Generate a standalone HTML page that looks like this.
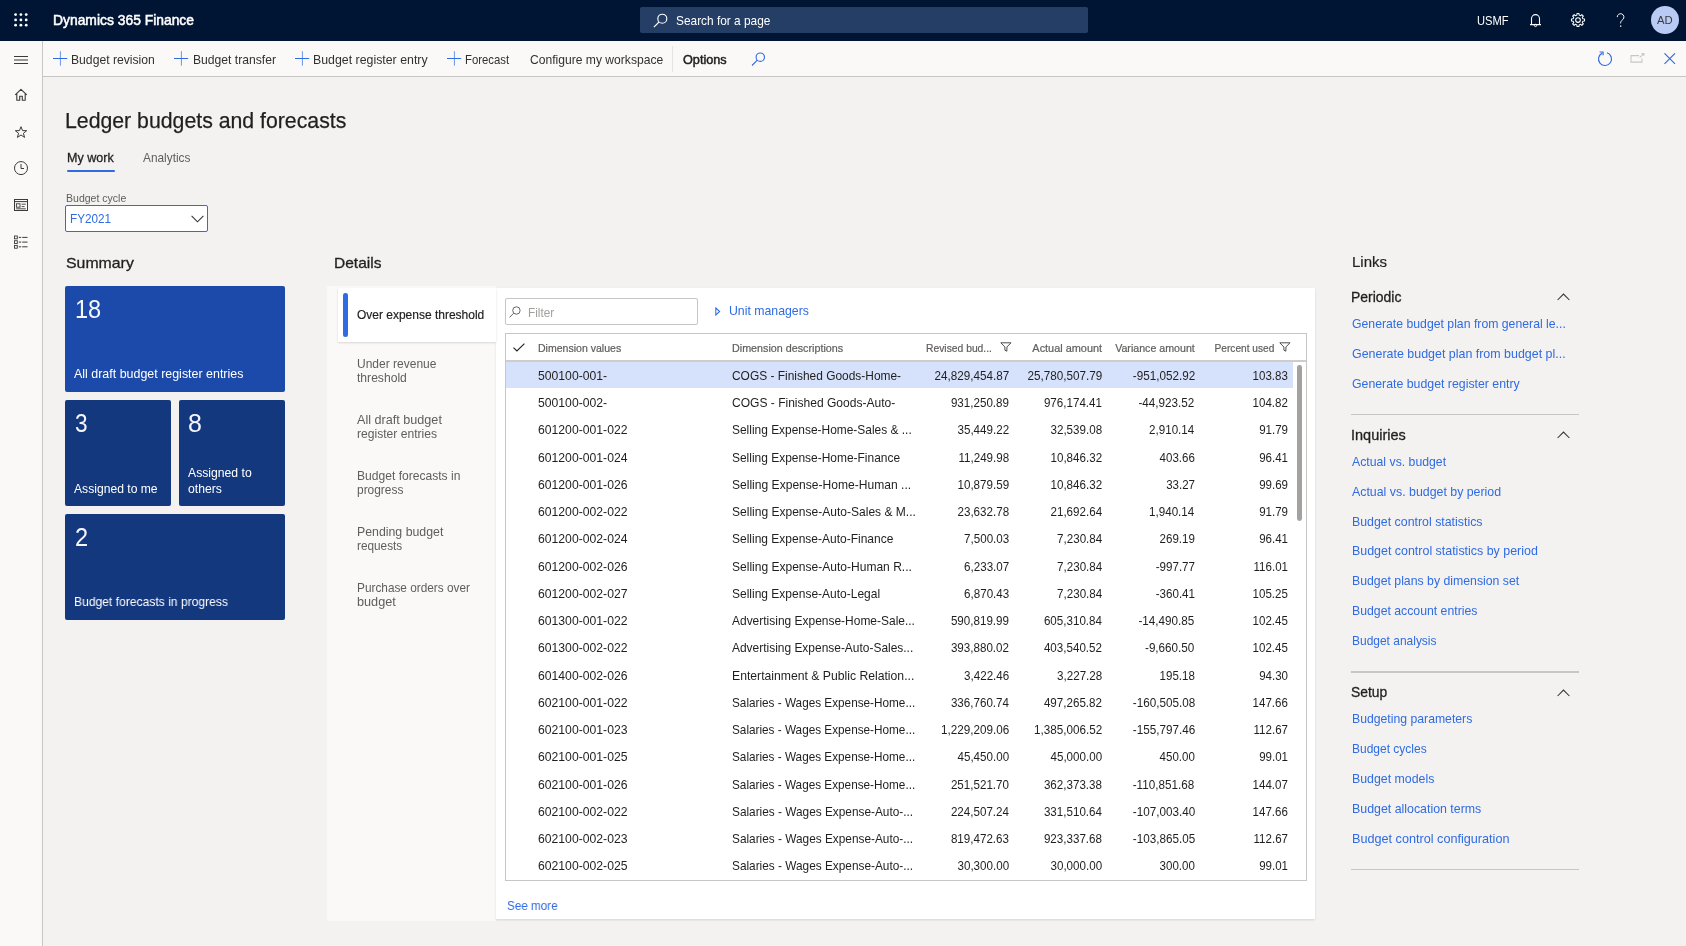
<!DOCTYPE html>
<html><head><meta charset="utf-8"><title>Ledger budgets and forecasts</title>
<style>
*{box-sizing:border-box;margin:0;padding:0}
html,body{width:1686px;height:946px;overflow:hidden}
body{font-family:"Liberation Sans",sans-serif;background:#f3f2f1;color:#201f1e;position:relative}
.abs{position:absolute}
.t{position:absolute;line-height:20px;white-space:nowrap;transform-origin:0 50%}
.t.r{transform-origin:100% 50%}
.hdr{position:absolute;left:0;top:0;width:1686px;height:41px;background:#001433}
.search{position:absolute;left:640px;top:7px;width:448px;height:26px;background:#253e66;border-radius:2px}
.avatar{position:absolute;left:1650.7px;top:5.8px;width:28.4px;height:28.4px;border-radius:50%;background:#b9cbf5}
.nav{position:absolute;left:0;top:41px;width:43px;height:905px;background:#faf9f8;border-right:1px solid #c8c6c4}
.abar{position:absolute;left:43px;top:41px;width:1643px;height:36px;background:#faf9f8;border-bottom:1px solid #c8c6c4}
.dd{position:absolute;left:65px;top:205px;width:143px;height:26.5px;border:1px solid #2f6be2;background:#fff;border-radius:2px}
.tile{position:absolute;height:105.7px;border-radius:2px}
.t1{background:#1b4aab}
.t2{background:#14387e}
.dpanel{position:absolute;left:327.3px;top:286.3px;width:169px;height:634.3px;background:#faf9f8}
.dmain{position:absolute;left:496px;top:288px;width:819px;height:630.6px;background:#fff;box-shadow:0 1px 2px rgba(0,0,0,.12)}
.dsel{position:absolute;left:338.3px;top:288px;width:158px;height:54.3px;background:#fff;box-shadow:0 1px 2px rgba(0,0,0,.14)}
.filter{position:absolute;left:505px;top:298px;width:193px;height:26.6px;border:1px solid #c8c6c4;border-radius:2px;background:#fff}
.grid{position:absolute;left:505px;top:333px;width:802px;height:547.5px;border:1px solid #c8c6c4;background:#fff}
.ghl{position:absolute;left:506px;top:360.2px;width:800px;height:1.8px;background:#cfcdcb}
.rsel{position:absolute;left:506px;top:362px;width:787px;height:25.6px;background:#d6e2fb}
.sbar{position:absolute;left:1297.2px;top:365.2px;width:4.8px;height:156px;background:#a3a2a0;border-radius:2.4px}
.layer{position:absolute;left:0;top:0;width:1686px;height:946px;will-change:transform}
</style></head>
<body>
<div class="layer">
<div class="hdr"></div>
<svg class="abs" style="left:14.4px;top:13.05px" width="14" height="14" viewBox="0 0 14 14" fill="#fff"><circle cx="1.60" cy="1.60" r="1.4"/><circle cx="1.60" cy="6.90" r="1.4"/><circle cx="1.60" cy="12.20" r="1.4"/><circle cx="6.90" cy="1.60" r="1.4"/><circle cx="6.90" cy="6.90" r="1.4"/><circle cx="6.90" cy="12.20" r="1.4"/><circle cx="12.20" cy="1.60" r="1.4"/><circle cx="12.20" cy="6.90" r="1.4"/><circle cx="12.20" cy="12.20" r="1.4"/></svg>
<div class="t" style="font-size:15px;color:#fff;top:9.50px;-webkit-text-stroke:0.55px #fff;left:53.00px;transform:scaleX(0.9242);">Dynamics 365 Finance</div>
<div class="search"></div>
<svg class="abs" style="left:653px;top:13px" width="15" height="15" viewBox="0 0 15 15"><circle cx="9.3" cy="5.7" r="4.5" fill="none" stroke="#fff" stroke-width="1.15"/><path d="M6 9 L0.9 14.1" stroke="#fff" stroke-width="1.15"/></svg>
<div class="t" style="font-size:13.2px;color:#fff;top:10.93px;left:675.50px;transform:scaleX(0.9005);">Search for a page</div>
<div class="t" style="font-size:12.6px;color:#fff;top:10.73px;left:1476.60px;transform:scaleX(0.8852);">USMF</div>
<svg class="abs" style="left:1529px;top:13px" width="13" height="15" viewBox="0 0 13 15"><path d="M1 11.6 H12 M2.5 11.6 V5.6 A4 4 0 0 1 10.5 5.6 V11.6" fill="none" stroke="#fff" stroke-width="1.1"/><circle cx="6.5" cy="12.45" r="1.15" fill="none" stroke="#fff" stroke-width="0.95"/></svg>
<svg class="abs" style="left:1570.3px;top:11.95px" width="16" height="16" viewBox="0 0 16 16"><path d="M14.52 6.97 L14.52 9.03 L12.86 9.17 L12.26 10.61 L13.34 11.88 L11.88 13.34 L10.61 12.26 L9.17 12.86 L9.03 14.52 L6.97 14.52 L6.83 12.86 L5.39 12.26 L4.12 13.34 L2.66 11.88 L3.74 10.61 L3.14 9.17 L1.48 9.03 L1.48 6.97 L3.14 6.83 L3.74 5.39 L2.66 4.12 L4.12 2.66 L5.39 3.74 L6.83 3.14 L6.97 1.48 L9.03 1.48 L9.17 3.14 L10.61 3.74 L11.88 2.66 L13.34 4.12 L12.26 5.39 L12.86 6.83 Z" fill="none" stroke="#fff" stroke-width="1.05" stroke-linejoin="round"/><circle cx="8" cy="8" r="2.35" fill="none" stroke="#fff" stroke-width="1.05"/></svg>
<svg class="abs" style="left:1616.4px;top:12.6px" width="9.9" height="14.4" viewBox="0 0 11 16"><path d="M1.4 4.6 A3.7 3.7 0 1 1 7.6 7.2 C5.8 8.8 5.1 9.6 5.1 11.6" fill="none" stroke="#fff" stroke-width="1.1"/><rect x="4.4" y="13.9" width="1.5" height="1.4" fill="#fff"/></svg>
<div class="avatar"></div>
<div class="t" style="font-size:11.2px;color:#3b3a39;top:9.82px;left:1656.90px;transform:scaleX(1.0091);">AD</div>
<div class="nav"></div>
<svg class="abs" style="left:14px;top:55px" width="14" height="10" viewBox="0 0 14 10"><path d="M0 1.5 H14 M0 5 H14 M0 8.5 H14" stroke="#3b3a39" stroke-width="1"/></svg>
<svg class="abs" style="left:14px;top:88px" width="14" height="13" viewBox="0 0 14 13"><path d="M1.2 6.8 L7 1.3 L12.8 6.8 M2.8 5.6 V12.2 H5.7 V8.2 H8.3 V12.2 H11.2 V5.6" fill="none" stroke="#3b3a39" stroke-width="1.1" stroke-linejoin="round"/></svg>
<svg class="abs" style="left:14px;top:125px" width="14" height="14" viewBox="0 0 14 14"><path d="M7 1.7 L8.5 5.6 L12.7 5.7 L9.4 8.3 L10.6 12.4 L7 10 L3.4 12.4 L4.6 8.3 L1.3 5.7 L5.5 5.6 Z" fill="none" stroke="#3b3a39" stroke-width="1"/></svg>
<svg class="abs" style="left:13px;top:160px" width="16" height="16" viewBox="0 0 16 16"><circle cx="8" cy="8.1" r="6.5" fill="none" stroke="#3b3a39" stroke-width="1"/><path d="M8 4 V8.5 H11" fill="none" stroke="#3b3a39" stroke-width="1"/></svg>
<svg class="abs" style="left:14px;top:198.5px" width="14" height="12" viewBox="0 0 14 12"><rect x="0.5" y="0.5" width="13" height="11" fill="none" stroke="#3b3a39" stroke-width="1"/><path d="M0.5 2.6 H13.5" stroke="#3b3a39" stroke-width="1"/><rect x="2.4" y="4.8" width="3.6" height="3.4" fill="none" stroke="#3b3a39" stroke-width="0.9"/><path d="M7.6 5.2 H11.8 M7.6 7.6 H10.6 M2.2 9.8 H11.8" stroke="#3b3a39" stroke-width="0.9"/></svg>
<svg class="abs" style="left:14px;top:235px" width="14" height="14" viewBox="0 0 14 14"><rect x="0.5" y="1" width="2.8" height="2.8" fill="none" stroke="#3b3a39" stroke-width="0.9"/><rect x="0.5" y="5.7" width="2.8" height="2.8" fill="none" stroke="#3b3a39" stroke-width="0.9"/><rect x="0.5" y="10.4" width="2.8" height="2.8" fill="none" stroke="#3b3a39" stroke-width="0.9"/><path d="M4.8 2.4 H13.5 M4.8 7.1 H13.5 M4.8 11.8 H13.5" stroke="#3b3a39" stroke-width="1" stroke-dasharray="2.4 1 9 0"/></svg>
<div class="abar"></div>
<svg class="abs" style="left:53px;top:51px" width="15" height="15" viewBox="0 0 15 15"><path d="M7.4 0.2 V14.7" stroke="#2f6be2" stroke-width="1" stroke-opacity="0.7"/><path d="M0 7.5 H14.2" stroke="#2f6be2" stroke-width="1"/></svg>
<div class="t" style="font-size:13px;color:#323130;top:49.60px;left:71.40px;transform:scaleX(0.9352);">Budget revision</div>
<svg class="abs" style="left:174px;top:51px" width="15" height="15" viewBox="0 0 15 15"><path d="M7.4 0.2 V14.7" stroke="#2f6be2" stroke-width="1" stroke-opacity="0.7"/><path d="M0 7.5 H14.2" stroke="#2f6be2" stroke-width="1"/></svg>
<div class="t" style="font-size:13px;color:#323130;top:49.60px;left:192.60px;transform:scaleX(0.9338);">Budget transfer</div>
<svg class="abs" style="left:295px;top:51px" width="15" height="15" viewBox="0 0 15 15"><path d="M7.4 0.2 V14.7" stroke="#2f6be2" stroke-width="1" stroke-opacity="0.7"/><path d="M0 7.5 H14.2" stroke="#2f6be2" stroke-width="1"/></svg>
<div class="t" style="font-size:13px;color:#323130;top:49.60px;left:313.00px;transform:scaleX(0.9497);">Budget register entry</div>
<svg class="abs" style="left:447px;top:51px" width="15" height="15" viewBox="0 0 15 15"><path d="M7.4 0.2 V14.7" stroke="#2f6be2" stroke-width="1" stroke-opacity="0.7"/><path d="M0 7.5 H14.2" stroke="#2f6be2" stroke-width="1"/></svg>
<div class="t" style="font-size:13px;color:#323130;top:49.60px;left:465.10px;transform:scaleX(0.8740);">Forecast</div>
<div class="t" style="font-size:13px;color:#323130;top:49.60px;left:529.70px;transform:scaleX(0.9311);">Configure my workspace</div>
<div class="abs" style="left:672px;top:46px;width:1px;height:26px;background:#e5e3e1"></div>
<div class="t" style="font-size:13px;color:#201f1e;top:49.60px;-webkit-text-stroke:0.5px #201f1e;left:682.70px;transform:scaleX(0.9732);">Options</div>
<svg class="abs" style="left:751px;top:52px" width="15" height="14" viewBox="0 0 15 14"><circle cx="9.3" cy="5.2" r="4.2" fill="none" stroke="#2f6be2" stroke-width="1.1"/><path d="M6.3 8.2 L1 13.5" stroke="#2f6be2" stroke-width="1.1"/></svg>
<svg class="abs" style="left:1596.8px;top:50.5px" width="16" height="16" viewBox="0 0 16 16"><path d="M9.90 1.78 A6.5 6.5 0 1 1 5.25 2.11" fill="none" stroke="#2f6be2" stroke-width="1.15"/><path d="M2.6 1 H6.1 V4.3" fill="none" stroke="#2f6be2" stroke-width="1.15"/></svg>
<svg class="abs" style="left:1629.5px;top:53px" width="15" height="10" viewBox="0 0 15 10"><path d="M9 2.6 H1 V9.1 H12 V5.4" fill="none" stroke="#c8c6c4" stroke-width="1.05"/><path d="M9.6 4.6 L13.7 0.8 M11.6 0.6 H13.9 V2.8" fill="none" stroke="#c8c6c4" stroke-width="1.05"/></svg>
<svg class="abs" style="left:1664px;top:53px" width="12" height="12" viewBox="0 0 12 12"><path d="M0.5 0.3 L11 10.8 M11 0.3 L0.5 10.8" stroke="#2f6be2" stroke-width="1.1"/></svg>
<div class="t" style="font-size:22px;color:#201f1e;top:110.68px;-webkit-text-stroke:0.25px #201f1e;left:64.90px;transform:scaleX(0.9664);">Ledger budgets and forecasts</div>
<div class="t" style="font-size:13px;color:#201f1e;top:148.20px;-webkit-text-stroke:0.3px #201f1e;left:67.30px;transform:scaleX(0.9651);">My work</div>
<div class="abs" style="left:67.2px;top:169.8px;width:47.9px;height:2.5px;background:#2f6be2;border-radius:1.3px"></div>
<div class="t" style="font-size:13px;color:#605e5c;top:148.20px;left:143.00px;transform:scaleX(0.9112);">Analytics</div>
<div class="t" style="font-size:11.5px;color:#605e5c;top:187.62px;left:65.70px;transform:scaleX(0.9158);">Budget cycle</div>
<div class="dd"></div>
<div class="t" style="font-size:13.2px;color:#2f6be2;top:209.13px;left:70.40px;transform:scaleX(0.8890);">FY2021</div>
<svg class="abs" style="left:190.5px;top:214.5px" width="13" height="8" viewBox="0 0 13 8"><path d="M0.6 0.9 L6.5 6.8 L12.4 0.9" fill="none" stroke="#323130" stroke-width="1.05"/></svg>
<div class="t" style="font-size:15px;color:#201f1e;top:252.60px;-webkit-text-stroke:0.3px #201f1e;left:66.40px;transform:scaleX(1.0565);">Summary</div>
<div class="t" style="font-size:15px;color:#201f1e;top:252.60px;-webkit-text-stroke:0.3px #201f1e;left:333.50px;transform:scaleX(1.0338);">Details</div>
<div class="t" style="font-size:15px;color:#201f1e;top:252.20px;-webkit-text-stroke:0.2px #201f1e;left:1352.20px;transform:scaleX(0.9995);">Links</div>
<div class="tile t1" style="left:65.1px;top:286.1px;width:219.7px"></div>
<div class="tile t2" style="left:65.1px;top:400.15px;width:105.5px"></div>
<div class="tile t2" style="left:179.3px;top:400.15px;width:105.5px"></div>
<div class="tile t2" style="left:65.1px;top:514.4px;width:219.7px"></div>
<div class="t" style="font-size:26px;color:#f4f6fb;top:299.29px;left:75.40px;transform:scaleX(0.9059);">18</div>
<div class="t" style="font-size:26px;color:#f4f6fb;top:413.49px;left:75.00px;transform:scaleX(0.8714);">3</div>
<div class="t" style="font-size:26px;color:#f4f6fb;top:413.49px;left:188.00px;transform:scaleX(0.9613);">8</div>
<div class="t" style="font-size:26px;color:#f4f6fb;top:527.49px;left:75.00px;transform:scaleX(0.9059);">2</div>
<div class="t" style="font-size:13px;color:#fff;top:364.40px;left:73.90px;transform:scaleX(0.9569);">All draft budget register entries</div>
<div class="t" style="font-size:13px;color:#fff;top:478.80px;left:74.20px;transform:scaleX(0.9330);">Assigned to me</div>
<div class="t" style="font-size:13px;color:#fff;top:463.40px;left:188.00px;transform:scaleX(0.9377);">Assigned to</div>
<div class="t" style="font-size:13px;color:#fff;top:478.80px;left:188.00px;transform:scaleX(0.9355);">others</div>
<div class="t" style="font-size:13px;color:#fff;top:592.30px;left:74.20px;transform:scaleX(0.9300);">Budget forecasts in progress</div>
<div class="dpanel"></div><div class="dmain"></div><div class="dsel"></div>
<div class="abs" style="left:343px;top:293px;width:4.7px;height:43.6px;background:#2f6be2;border-radius:2.3px"></div>
<div class="t" style="font-size:13px;color:#201f1e;top:304.70px;-webkit-text-stroke:0.2px #201f1e;left:356.90px;transform:scaleX(0.9216);">Over expense threshold</div>
<div class="t" style="font-size:13px;color:#605e5c;top:353.50px;left:356.90px;transform:scaleX(0.9233);">Under revenue</div>
<div class="t" style="font-size:13px;color:#605e5c;top:367.50px;left:356.90px;transform:scaleX(0.9312);">threshold</div>
<div class="t" style="font-size:13px;color:#605e5c;top:409.50px;left:356.90px;transform:scaleX(0.9709);">All draft budget</div>
<div class="t" style="font-size:13px;color:#605e5c;top:423.50px;left:356.90px;transform:scaleX(0.9316);">register entries</div>
<div class="t" style="font-size:13px;color:#605e5c;top:465.50px;left:356.90px;transform:scaleX(0.9291);">Budget forecasts in</div>
<div class="t" style="font-size:13px;color:#605e5c;top:479.50px;left:356.90px;transform:scaleX(0.9174);">progress</div>
<div class="t" style="font-size:13px;color:#605e5c;top:521.50px;left:356.90px;transform:scaleX(0.9475);">Pending budget</div>
<div class="t" style="font-size:13px;color:#605e5c;top:535.50px;left:356.90px;transform:scaleX(0.9065);">requests</div>
<div class="t" style="font-size:13px;color:#605e5c;top:577.50px;left:356.90px;transform:scaleX(0.9092);">Purchase orders over</div>
<div class="t" style="font-size:13px;color:#605e5c;top:591.50px;left:356.90px;transform:scaleX(0.9758);">budget</div>
<div class="filter"></div>
<svg class="abs" style="left:509.2px;top:305.6px" width="12" height="12" viewBox="0 0 12 12"><circle cx="7.4" cy="4.5" r="3.7" fill="none" stroke="#605e5c" stroke-width="0.95"/><path d="M4.7 7.2 L0.5 11.4" stroke="#605e5c" stroke-width="0.95"/></svg>
<div class="t" style="font-size:13.2px;color:#a19f9d;top:303.13px;left:528.00px;transform:scaleX(0.8932);">Filter</div>
<svg class="abs" style="left:715px;top:306.6px" width="6" height="9" viewBox="0 0 6 9"><path d="M0.8 1 L4.6 4.5 L0.8 8 Z" fill="none" stroke="#2f6be2" stroke-width="1.05"/></svg>
<div class="t" style="font-size:13px;color:#2f6be2;top:300.90px;left:729.30px;transform:scaleX(0.9450);">Unit managers</div>
<div class="grid"></div><div class="ghl"></div><div class="rsel"></div>
<svg class="abs" style="left:512.6px;top:343.3px" width="12" height="9" viewBox="0 0 12 9"><path d="M0.5 4.6 L3.9 8 L11.4 0.6" fill="none" stroke="#201f1e" stroke-width="1.1"/></svg>
<div class="t" style="font-size:11.6px;color:#605e5c;top:337.78px;-webkit-text-stroke:0.22px #605e5c;left:538.10px;transform:scaleX(0.9087);">Dimension values</div>
<div class="t" style="font-size:11.6px;color:#605e5c;top:337.78px;-webkit-text-stroke:0.22px #605e5c;left:731.50px;transform:scaleX(0.9273);">Dimension descriptions</div>
<div class="t" style="font-size:11.6px;color:#605e5c;top:337.78px;-webkit-text-stroke:0.22px #605e5c;left:925.90px;transform:scaleX(0.8900);">Revised bud...</div>
<div class="t r" style="font-size:11.6px;color:#605e5c;top:337.78px;-webkit-text-stroke:0.22px #605e5c;left:1027.95px;transform:scaleX(0.9413);">Actual amount</div>
<div class="t r" style="font-size:11.6px;color:#605e5c;top:337.78px;-webkit-text-stroke:0.22px #605e5c;left:1107.96px;transform:scaleX(0.9178);">Variance amount</div>
<div class="t r" style="font-size:11.6px;color:#605e5c;top:337.78px;-webkit-text-stroke:0.22px #605e5c;left:1205.95px;transform:scaleX(0.8749);">Percent used</div>
<svg class="abs" style="left:999.6px;top:342.2px" width="12" height="10" viewBox="0 0 12 10"><path d="M0.8 0.8 H11 L6.9 5 V9.2 L4.9 8.2 V5 Z" fill="none" stroke="#484644" stroke-width="0.95" stroke-linejoin="round"/></svg>
<svg class="abs" style="left:1278.9px;top:342.2px" width="12" height="10" viewBox="0 0 12 10"><path d="M0.8 0.8 H11 L6.9 5 V9.2 L4.9 8.2 V5 Z" fill="none" stroke="#484644" stroke-width="0.95" stroke-linejoin="round"/></svg>
<div class="t" style="font-size:12.4px;color:#201f1e;top:366.00px;left:537.60px;transform:scaleX(0.9840);">500100-001-</div>
<div class="t" style="font-size:12.4px;color:#201f1e;top:366.00px;left:731.60px;transform:scaleX(0.9630);">COGS - Finished Goods-Home-</div>
<div class="t r" style="font-size:12.4px;color:#201f1e;top:366.00px;left:929.70px;transform:scaleX(0.9430);">24,829,454.87</div>
<div class="t r" style="font-size:12.4px;color:#201f1e;top:366.00px;left:1022.70px;transform:scaleX(0.9430);">25,780,507.79</div>
<div class="t r" style="font-size:12.4px;color:#201f1e;top:366.00px;left:1128.51px;transform:scaleX(0.9430);">-951,052.92</div>
<div class="t r" style="font-size:12.4px;color:#201f1e;top:366.00px;left:1249.77px;transform:scaleX(0.9310);">103.83</div>
<div class="t" style="font-size:12.4px;color:#201f1e;top:393.24px;left:537.60px;transform:scaleX(0.9840);">500100-002-</div>
<div class="t" style="font-size:12.4px;color:#201f1e;top:393.24px;left:731.60px;transform:scaleX(0.9715);">COGS - Finished Goods-Auto-</div>
<div class="t r" style="font-size:12.4px;color:#201f1e;top:393.24px;left:946.94px;transform:scaleX(0.9370);">931,250.89</div>
<div class="t r" style="font-size:12.4px;color:#201f1e;top:393.24px;left:1039.94px;transform:scaleX(0.9370);">976,174.41</div>
<div class="t r" style="font-size:12.4px;color:#201f1e;top:393.24px;left:1135.41px;transform:scaleX(0.9430);">-44,923.52</div>
<div class="t r" style="font-size:12.4px;color:#201f1e;top:393.24px;left:1249.77px;transform:scaleX(0.9310);">104.82</div>
<div class="t" style="font-size:12.4px;color:#201f1e;top:420.48px;left:537.60px;transform:scaleX(0.9840);">601200-001-022</div>
<div class="t" style="font-size:12.4px;color:#201f1e;top:420.48px;left:731.60px;transform:scaleX(0.9630);">Selling Expense-Home-Sales &amp; ...</div>
<div class="t r" style="font-size:12.4px;color:#201f1e;top:420.48px;left:953.84px;transform:scaleX(0.9370);">35,449.22</div>
<div class="t r" style="font-size:12.4px;color:#201f1e;top:420.48px;left:1046.84px;transform:scaleX(0.9370);">32,539.08</div>
<div class="t r" style="font-size:12.4px;color:#201f1e;top:420.48px;left:1146.43px;transform:scaleX(0.9370);">2,910.14</div>
<div class="t r" style="font-size:12.4px;color:#201f1e;top:420.48px;left:1256.67px;transform:scaleX(0.9310);">91.79</div>
<div class="t" style="font-size:12.4px;color:#201f1e;top:447.72px;left:537.60px;transform:scaleX(0.9840);">601200-001-024</div>
<div class="t" style="font-size:12.4px;color:#201f1e;top:447.72px;left:731.60px;transform:scaleX(0.9645);">Selling Expense-Home-Finance</div>
<div class="t r" style="font-size:12.4px;color:#201f1e;top:447.72px;left:954.76px;transform:scaleX(0.9370);">11,249.98</div>
<div class="t r" style="font-size:12.4px;color:#201f1e;top:447.72px;left:1046.84px;transform:scaleX(0.9370);">10,846.32</div>
<div class="t r" style="font-size:12.4px;color:#201f1e;top:447.72px;left:1156.77px;transform:scaleX(0.9310);">403.66</div>
<div class="t r" style="font-size:12.4px;color:#201f1e;top:447.72px;left:1256.67px;transform:scaleX(0.9310);">96.41</div>
<div class="t" style="font-size:12.4px;color:#201f1e;top:474.96px;left:537.60px;transform:scaleX(0.9840);">601200-001-026</div>
<div class="t" style="font-size:12.4px;color:#201f1e;top:474.96px;left:731.60px;transform:scaleX(0.9740);">Selling Expense-Home-Human ...</div>
<div class="t r" style="font-size:12.4px;color:#201f1e;top:474.96px;left:953.84px;transform:scaleX(0.9370);">10,879.59</div>
<div class="t r" style="font-size:12.4px;color:#201f1e;top:474.96px;left:1046.84px;transform:scaleX(0.9370);">10,846.32</div>
<div class="t r" style="font-size:12.4px;color:#201f1e;top:474.96px;left:1163.67px;transform:scaleX(0.9310);">33.27</div>
<div class="t r" style="font-size:12.4px;color:#201f1e;top:474.96px;left:1256.67px;transform:scaleX(0.9310);">99.69</div>
<div class="t" style="font-size:12.4px;color:#201f1e;top:502.20px;left:537.60px;transform:scaleX(0.9840);">601200-002-022</div>
<div class="t" style="font-size:12.4px;color:#201f1e;top:502.20px;left:731.60px;transform:scaleX(0.9706);">Selling Expense-Auto-Sales &amp; M...</div>
<div class="t r" style="font-size:12.4px;color:#201f1e;top:502.20px;left:953.84px;transform:scaleX(0.9370);">23,632.78</div>
<div class="t r" style="font-size:12.4px;color:#201f1e;top:502.20px;left:1046.84px;transform:scaleX(0.9370);">21,692.64</div>
<div class="t r" style="font-size:12.4px;color:#201f1e;top:502.20px;left:1146.43px;transform:scaleX(0.9370);">1,940.14</div>
<div class="t r" style="font-size:12.4px;color:#201f1e;top:502.20px;left:1256.67px;transform:scaleX(0.9310);">91.79</div>
<div class="t" style="font-size:12.4px;color:#201f1e;top:529.44px;left:537.60px;transform:scaleX(0.9840);">601200-002-024</div>
<div class="t" style="font-size:12.4px;color:#201f1e;top:529.44px;left:731.60px;transform:scaleX(0.9680);">Selling Expense-Auto-Finance</div>
<div class="t r" style="font-size:12.4px;color:#201f1e;top:529.44px;left:960.73px;transform:scaleX(0.9370);">7,500.03</div>
<div class="t r" style="font-size:12.4px;color:#201f1e;top:529.44px;left:1053.73px;transform:scaleX(0.9370);">7,230.84</div>
<div class="t r" style="font-size:12.4px;color:#201f1e;top:529.44px;left:1156.77px;transform:scaleX(0.9310);">269.19</div>
<div class="t r" style="font-size:12.4px;color:#201f1e;top:529.44px;left:1256.67px;transform:scaleX(0.9310);">96.41</div>
<div class="t" style="font-size:12.4px;color:#201f1e;top:556.68px;left:537.60px;transform:scaleX(0.9840);">601200-002-026</div>
<div class="t" style="font-size:12.4px;color:#201f1e;top:556.68px;left:731.60px;transform:scaleX(0.9708);">Selling Expense-Auto-Human R...</div>
<div class="t r" style="font-size:12.4px;color:#201f1e;top:556.68px;left:960.73px;transform:scaleX(0.9370);">6,233.07</div>
<div class="t r" style="font-size:12.4px;color:#201f1e;top:556.68px;left:1053.73px;transform:scaleX(0.9370);">7,230.84</div>
<div class="t r" style="font-size:12.4px;color:#201f1e;top:556.68px;left:1152.64px;transform:scaleX(0.9370);">-997.77</div>
<div class="t r" style="font-size:12.4px;color:#201f1e;top:556.68px;left:1250.69px;transform:scaleX(0.9310);">116.01</div>
<div class="t" style="font-size:12.4px;color:#201f1e;top:583.92px;left:537.60px;transform:scaleX(0.9840);">601200-002-027</div>
<div class="t" style="font-size:12.4px;color:#201f1e;top:583.92px;left:731.60px;transform:scaleX(0.9686);">Selling Expense-Auto-Legal</div>
<div class="t r" style="font-size:12.4px;color:#201f1e;top:583.92px;left:960.73px;transform:scaleX(0.9370);">6,870.43</div>
<div class="t r" style="font-size:12.4px;color:#201f1e;top:583.92px;left:1053.73px;transform:scaleX(0.9370);">7,230.84</div>
<div class="t r" style="font-size:12.4px;color:#201f1e;top:583.92px;left:1152.64px;transform:scaleX(0.9370);">-360.41</div>
<div class="t r" style="font-size:12.4px;color:#201f1e;top:583.92px;left:1249.77px;transform:scaleX(0.9310);">105.25</div>
<div class="t" style="font-size:12.4px;color:#201f1e;top:611.16px;left:537.60px;transform:scaleX(0.9840);">601300-001-022</div>
<div class="t" style="font-size:12.4px;color:#201f1e;top:611.16px;left:731.60px;transform:scaleX(0.9660);">Advertising Expense-Home-Sale...</div>
<div class="t r" style="font-size:12.4px;color:#201f1e;top:611.16px;left:946.94px;transform:scaleX(0.9370);">590,819.99</div>
<div class="t r" style="font-size:12.4px;color:#201f1e;top:611.16px;left:1039.94px;transform:scaleX(0.9370);">605,310.84</div>
<div class="t r" style="font-size:12.4px;color:#201f1e;top:611.16px;left:1135.41px;transform:scaleX(0.9430);">-14,490.85</div>
<div class="t r" style="font-size:12.4px;color:#201f1e;top:611.16px;left:1249.77px;transform:scaleX(0.9310);">102.45</div>
<div class="t" style="font-size:12.4px;color:#201f1e;top:638.40px;left:537.60px;transform:scaleX(0.9840);">601300-002-022</div>
<div class="t" style="font-size:12.4px;color:#201f1e;top:638.40px;left:731.60px;transform:scaleX(0.9640);">Advertising Expense-Auto-Sales...</div>
<div class="t r" style="font-size:12.4px;color:#201f1e;top:638.40px;left:946.94px;transform:scaleX(0.9370);">393,880.02</div>
<div class="t r" style="font-size:12.4px;color:#201f1e;top:638.40px;left:1039.94px;transform:scaleX(0.9370);">403,540.52</div>
<div class="t r" style="font-size:12.4px;color:#201f1e;top:638.40px;left:1142.30px;transform:scaleX(0.9430);">-9,660.50</div>
<div class="t r" style="font-size:12.4px;color:#201f1e;top:638.40px;left:1249.77px;transform:scaleX(0.9310);">102.45</div>
<div class="t" style="font-size:12.4px;color:#201f1e;top:665.64px;left:537.60px;transform:scaleX(0.9840);">601400-002-026</div>
<div class="t" style="font-size:12.4px;color:#201f1e;top:665.64px;left:731.60px;transform:scaleX(0.9840);">Entertainment &amp; Public Relation...</div>
<div class="t r" style="font-size:12.4px;color:#201f1e;top:665.64px;left:960.73px;transform:scaleX(0.9370);">3,422.46</div>
<div class="t r" style="font-size:12.4px;color:#201f1e;top:665.64px;left:1053.73px;transform:scaleX(0.9370);">3,227.28</div>
<div class="t r" style="font-size:12.4px;color:#201f1e;top:665.64px;left:1156.77px;transform:scaleX(0.9310);">195.18</div>
<div class="t r" style="font-size:12.4px;color:#201f1e;top:665.64px;left:1256.67px;transform:scaleX(0.9310);">94.30</div>
<div class="t" style="font-size:12.4px;color:#201f1e;top:692.88px;left:537.60px;transform:scaleX(0.9840);">602100-001-022</div>
<div class="t" style="font-size:12.4px;color:#201f1e;top:692.88px;left:731.60px;transform:scaleX(0.9490);">Salaries - Wages Expense-Home...</div>
<div class="t r" style="font-size:12.4px;color:#201f1e;top:692.88px;left:946.94px;transform:scaleX(0.9370);">336,760.74</div>
<div class="t r" style="font-size:12.4px;color:#201f1e;top:692.88px;left:1039.94px;transform:scaleX(0.9370);">497,265.82</div>
<div class="t r" style="font-size:12.4px;color:#201f1e;top:692.88px;left:1128.51px;transform:scaleX(0.9430);">-160,505.08</div>
<div class="t r" style="font-size:12.4px;color:#201f1e;top:692.88px;left:1249.77px;transform:scaleX(0.9310);">147.66</div>
<div class="t" style="font-size:12.4px;color:#201f1e;top:720.12px;left:537.60px;transform:scaleX(0.9840);">602100-001-023</div>
<div class="t" style="font-size:12.4px;color:#201f1e;top:720.12px;left:731.60px;transform:scaleX(0.9490);">Salaries - Wages Expense-Home...</div>
<div class="t r" style="font-size:12.4px;color:#201f1e;top:720.12px;left:936.60px;transform:scaleX(0.9430);">1,229,209.06</div>
<div class="t r" style="font-size:12.4px;color:#201f1e;top:720.12px;left:1029.60px;transform:scaleX(0.9430);">1,385,006.52</div>
<div class="t r" style="font-size:12.4px;color:#201f1e;top:720.12px;left:1128.51px;transform:scaleX(0.9430);">-155,797.46</div>
<div class="t r" style="font-size:12.4px;color:#201f1e;top:720.12px;left:1250.69px;transform:scaleX(0.9310);">112.67</div>
<div class="t" style="font-size:12.4px;color:#201f1e;top:747.36px;left:537.60px;transform:scaleX(0.9840);">602100-001-025</div>
<div class="t" style="font-size:12.4px;color:#201f1e;top:747.36px;left:731.60px;transform:scaleX(0.9490);">Salaries - Wages Expense-Home...</div>
<div class="t r" style="font-size:12.4px;color:#201f1e;top:747.36px;left:953.84px;transform:scaleX(0.9370);">45,450.00</div>
<div class="t r" style="font-size:12.4px;color:#201f1e;top:747.36px;left:1046.84px;transform:scaleX(0.9370);">45,000.00</div>
<div class="t r" style="font-size:12.4px;color:#201f1e;top:747.36px;left:1156.77px;transform:scaleX(0.9310);">450.00</div>
<div class="t r" style="font-size:12.4px;color:#201f1e;top:747.36px;left:1256.67px;transform:scaleX(0.9310);">99.01</div>
<div class="t" style="font-size:12.4px;color:#201f1e;top:774.60px;left:537.60px;transform:scaleX(0.9840);">602100-001-026</div>
<div class="t" style="font-size:12.4px;color:#201f1e;top:774.60px;left:731.60px;transform:scaleX(0.9490);">Salaries - Wages Expense-Home...</div>
<div class="t r" style="font-size:12.4px;color:#201f1e;top:774.60px;left:946.94px;transform:scaleX(0.9370);">251,521.70</div>
<div class="t r" style="font-size:12.4px;color:#201f1e;top:774.60px;left:1039.94px;transform:scaleX(0.9370);">362,373.38</div>
<div class="t r" style="font-size:12.4px;color:#201f1e;top:774.60px;left:1129.43px;transform:scaleX(0.9430);">-110,851.68</div>
<div class="t r" style="font-size:12.4px;color:#201f1e;top:774.60px;left:1249.77px;transform:scaleX(0.9310);">144.07</div>
<div class="t" style="font-size:12.4px;color:#201f1e;top:801.84px;left:537.60px;transform:scaleX(0.9840);">602100-002-022</div>
<div class="t" style="font-size:12.4px;color:#201f1e;top:801.84px;left:731.60px;transform:scaleX(0.9550);">Salaries - Wages Expense-Auto-...</div>
<div class="t r" style="font-size:12.4px;color:#201f1e;top:801.84px;left:946.94px;transform:scaleX(0.9370);">224,507.24</div>
<div class="t r" style="font-size:12.4px;color:#201f1e;top:801.84px;left:1039.94px;transform:scaleX(0.9370);">331,510.64</div>
<div class="t r" style="font-size:12.4px;color:#201f1e;top:801.84px;left:1128.51px;transform:scaleX(0.9430);">-107,003.40</div>
<div class="t r" style="font-size:12.4px;color:#201f1e;top:801.84px;left:1249.77px;transform:scaleX(0.9310);">147.66</div>
<div class="t" style="font-size:12.4px;color:#201f1e;top:829.08px;left:537.60px;transform:scaleX(0.9840);">602100-002-023</div>
<div class="t" style="font-size:12.4px;color:#201f1e;top:829.08px;left:731.60px;transform:scaleX(0.9550);">Salaries - Wages Expense-Auto-...</div>
<div class="t r" style="font-size:12.4px;color:#201f1e;top:829.08px;left:946.94px;transform:scaleX(0.9370);">819,472.63</div>
<div class="t r" style="font-size:12.4px;color:#201f1e;top:829.08px;left:1039.94px;transform:scaleX(0.9370);">923,337.68</div>
<div class="t r" style="font-size:12.4px;color:#201f1e;top:829.08px;left:1128.51px;transform:scaleX(0.9430);">-103,865.05</div>
<div class="t r" style="font-size:12.4px;color:#201f1e;top:829.08px;left:1250.69px;transform:scaleX(0.9310);">112.67</div>
<div class="t" style="font-size:12.4px;color:#201f1e;top:856.32px;left:537.60px;transform:scaleX(0.9840);">602100-002-025</div>
<div class="t" style="font-size:12.4px;color:#201f1e;top:856.32px;left:731.60px;transform:scaleX(0.9550);">Salaries - Wages Expense-Auto-...</div>
<div class="t r" style="font-size:12.4px;color:#201f1e;top:856.32px;left:953.84px;transform:scaleX(0.9370);">30,300.00</div>
<div class="t r" style="font-size:12.4px;color:#201f1e;top:856.32px;left:1046.84px;transform:scaleX(0.9370);">30,000.00</div>
<div class="t r" style="font-size:12.4px;color:#201f1e;top:856.32px;left:1156.77px;transform:scaleX(0.9310);">300.00</div>
<div class="t r" style="font-size:12.4px;color:#201f1e;top:856.32px;left:1256.67px;transform:scaleX(0.9310);">99.01</div>
<div class="sbar"></div>
<div class="t" style="font-size:13px;color:#2f6be2;top:895.50px;left:506.80px;transform:scaleX(0.8978);">See more</div>
<div class="t" style="font-size:14.2px;color:#201f1e;top:287.13px;-webkit-text-stroke:0.3px #201f1e;left:1350.60px;transform:scaleX(0.9844);">Periodic</div>
<svg class="abs" style="left:1557.4px;top:293.4px" width="13" height="8" viewBox="0 0 13 8"><path d="M0.6 7 L6.5 1.1 L12.4 7" fill="none" stroke="#323130" stroke-width="1.05"/></svg>
<div class="t" style="font-size:13px;color:#2f6be2;top:314.20px;left:1351.80px;transform:scaleX(0.9422);">Generate budget plan from general le...</div>
<div class="t" style="font-size:13px;color:#2f6be2;top:344.20px;left:1351.80px;transform:scaleX(0.9565);">Generate budget plan from budget pl...</div>
<div class="t" style="font-size:13px;color:#2f6be2;top:374.20px;left:1351.80px;transform:scaleX(0.9472);">Generate budget register entry</div>
<div class="abs" style="left:1350.6px;top:414px;width:228.4px;height:1px;background:#c8c6c4"></div>
<div class="t" style="font-size:14.2px;color:#201f1e;top:424.78px;-webkit-text-stroke:0.3px #201f1e;left:1350.60px;transform:scaleX(1.0210);">Inquiries</div>
<svg class="abs" style="left:1557.4px;top:431.2px" width="13" height="8" viewBox="0 0 13 8"><path d="M0.6 7 L6.5 1.1 L12.4 7" fill="none" stroke="#323130" stroke-width="1.05"/></svg>
<div class="t" style="font-size:13px;color:#2f6be2;top:451.70px;left:1351.80px;transform:scaleX(0.9436);">Actual vs. budget</div>
<div class="t" style="font-size:13px;color:#2f6be2;top:481.63px;left:1351.80px;transform:scaleX(0.9508);">Actual vs. budget by period</div>
<div class="t" style="font-size:13px;color:#2f6be2;top:511.56px;left:1351.80px;transform:scaleX(0.9506);">Budget control statistics</div>
<div class="t" style="font-size:13px;color:#2f6be2;top:541.49px;left:1351.80px;transform:scaleX(0.9559);">Budget control statistics by period</div>
<div class="t" style="font-size:13px;color:#2f6be2;top:571.42px;left:1351.80px;transform:scaleX(0.9443);">Budget plans by dimension set</div>
<div class="t" style="font-size:13px;color:#2f6be2;top:601.35px;left:1351.80px;transform:scaleX(0.9430);">Budget account entries</div>
<div class="t" style="font-size:13px;color:#2f6be2;top:631.28px;left:1351.80px;transform:scaleX(0.9207);">Budget analysis</div>
<div class="abs" style="left:1350.6px;top:671.4px;width:228.4px;height:1.4px;background:#c8c6c4"></div>
<div class="t" style="font-size:14.2px;color:#201f1e;top:681.68px;-webkit-text-stroke:0.3px #201f1e;left:1350.90px;transform:scaleX(0.9755);">Setup</div>
<svg class="abs" style="left:1557.4px;top:688.6px" width="13" height="8" viewBox="0 0 13 8"><path d="M0.6 7 L6.5 1.1 L12.4 7" fill="none" stroke="#323130" stroke-width="1.05"/></svg>
<div class="t" style="font-size:13px;color:#2f6be2;top:709.40px;left:1351.80px;transform:scaleX(0.9405);">Budgeting parameters</div>
<div class="t" style="font-size:13px;color:#2f6be2;top:739.25px;left:1351.80px;transform:scaleX(0.9230);">Budget cycles</div>
<div class="t" style="font-size:13px;color:#2f6be2;top:769.10px;left:1351.80px;transform:scaleX(0.9490);">Budget models</div>
<div class="t" style="font-size:13px;color:#2f6be2;top:798.95px;left:1351.80px;transform:scaleX(0.9518);">Budget allocation terms</div>
<div class="t" style="font-size:13px;color:#2f6be2;top:828.80px;left:1351.80px;transform:scaleX(0.9729);">Budget control configuration</div>
<div class="abs" style="left:1350.6px;top:869px;width:228.4px;height:1px;background:#c8c6c4"></div>
</div>
</body></html>
